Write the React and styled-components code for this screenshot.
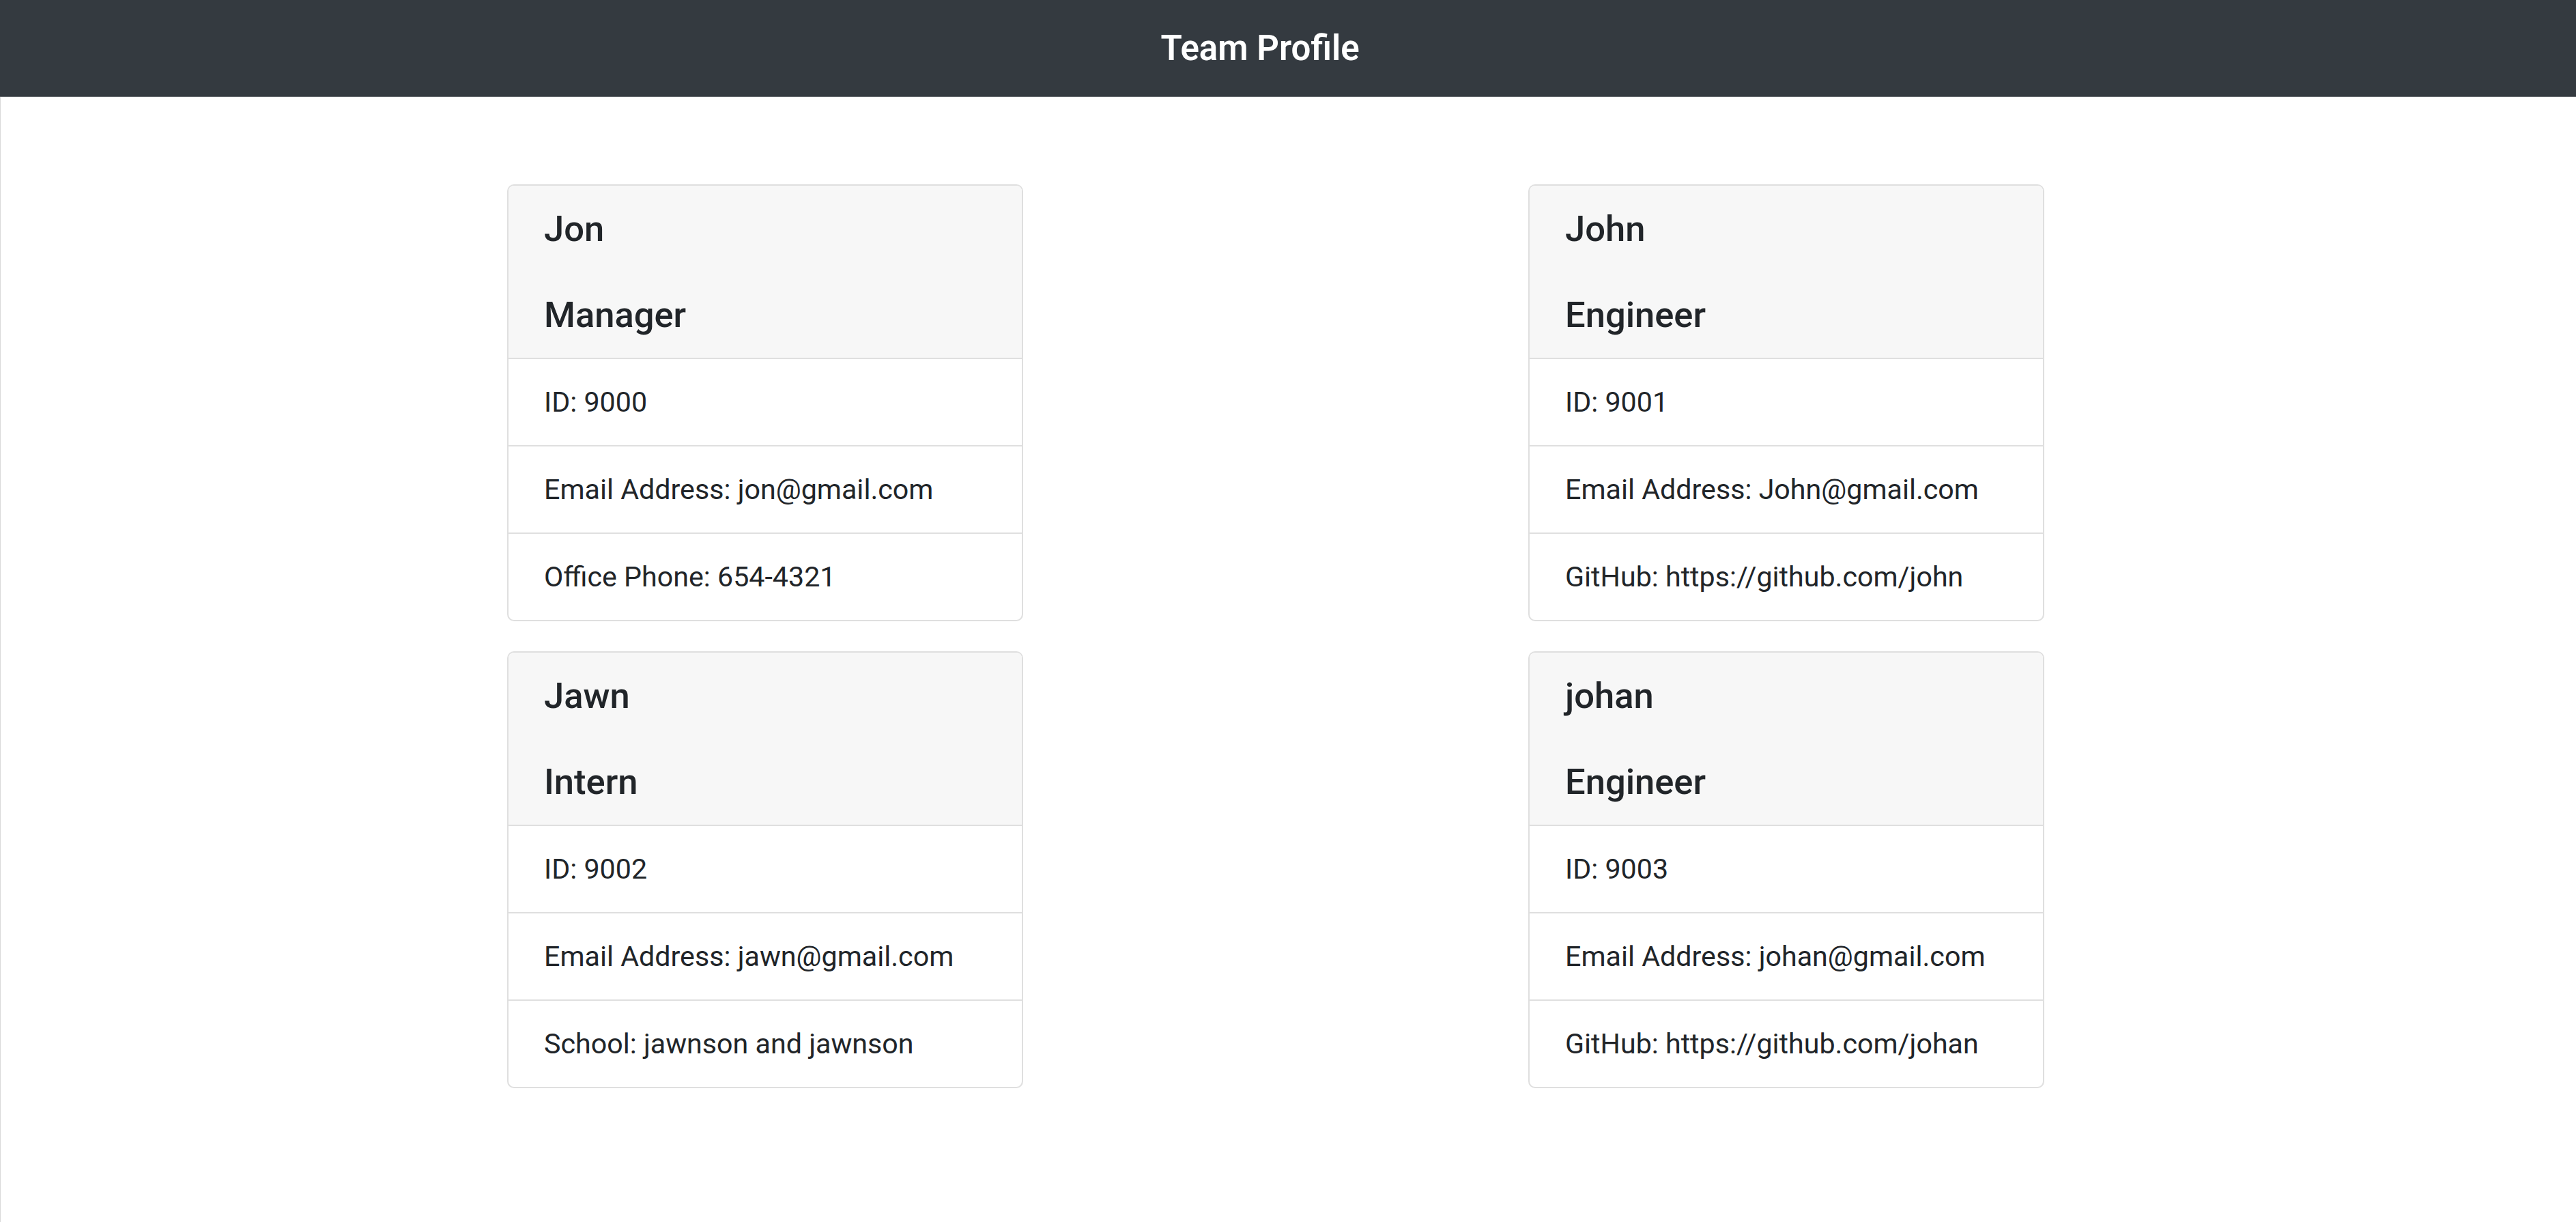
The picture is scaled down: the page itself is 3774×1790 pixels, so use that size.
import React from "react";
import styled, { createGlobalStyle } from "styled-components";

const GlobalStyle = createGlobalStyle`
  html, body {
    margin: 0;
    padding: 0;
    background: #ffffff;
  }
  body {
    font-family: "Segoe UI", Roboto, "Noto Sans", "Liberation Sans", sans-serif;
    color: #212529;
  }
  * { box-sizing: border-box; }
`;

const Page = styled.div`
  min-height: 1790px;
  display: flex;
  flex-direction: column;
`;

const TopBar = styled.header`
  height: 142px;
  background: #343a40;
  border-bottom: 1px solid #5f6368;
  display: flex;
  align-items: center;
  justify-content: center;
  padding-right: 82px;
`;

const Title = styled.h1`
  margin: 0;
  color: #ffffff;
  font-size: 51px;
  font-weight: 600;
  line-height: 1.2;
`;

const Main = styled.main`
  flex: 1;
  border-left: 1px solid #d9d9d9;
  padding: 128px 38px 0 0;
`;

const Grid = styled.div`
  width: 2992px;
  margin: 0 auto;
  display: grid;
  grid-template-columns: repeat(2, 1fr);
  row-gap: 44px;
  justify-items: center;
`;

const Card = styled.section`
  width: 756px;
  background: #ffffff;
  border: 2px solid #dfdfdf;
  border-radius: 10px;
  overflow: hidden;
`;

const CardHeader = styled.div`
  background: #f7f7f7;
  border-bottom: 2px solid #dfdfdf;
  padding: 31.5px 52.5px;
  display: flex;
  flex-direction: column;
  gap: 63px;
`;

const Heading = styled.h5`
  margin: 0;
  font-size: 52.5px;
  font-weight: 500;
  line-height: 63px;
  color: #212529;
`;

const List = styled.ul`
  list-style: none;
  margin: 0;
  padding: 0;
`;

const Item = styled.li`
  padding: 31.5px 52.5px;
  font-size: 41.2px;
  line-height: 63px;
  border-top: ${(p) => (p.$first ? "none" : "2px solid #dfdfdf")};
`;

const team = [
  {
    name: "Jon",
    role: "Manager",
    id: 9000,
    email: "jon@gmail.com",
    extra: "Office Phone: 654-4321",
  },
  {
    name: "John",
    role: "Engineer",
    id: 9001,
    email: "John@gmail.com",
    extra: "GitHub: https://github.com/john",
  },
  {
    name: "Jawn",
    role: "Intern",
    id: 9002,
    email: "jawn@gmail.com",
    extra: "School: jawnson and jawnson",
  },
  {
    name: "johan",
    role: "Engineer",
    id: 9003,
    email: "johan@gmail.com",
    extra: "GitHub: https://github.com/johan",
  },
];

function ProfileCard({ member }) {
  return (
    <Card>
      <CardHeader>
        <Heading>{member.name}</Heading>
        <Heading>{member.role}</Heading>
      </CardHeader>
      <List>
        <Item $first>ID: {member.id}</Item>
        <Item>Email Address: {member.email}</Item>
        <Item>{member.extra}</Item>
      </List>
    </Card>
  );
}

export default function App() {
  return (
    <>
      <GlobalStyle />
      <Page>
        <TopBar>
          <Title>Team Profile</Title>
        </TopBar>
        <Main>
          <Grid>
            {team.map((m) => (
              <ProfileCard key={m.id} member={m} />
            ))}
          </Grid>
        </Main>
      </Page>
    </>
  );
}
